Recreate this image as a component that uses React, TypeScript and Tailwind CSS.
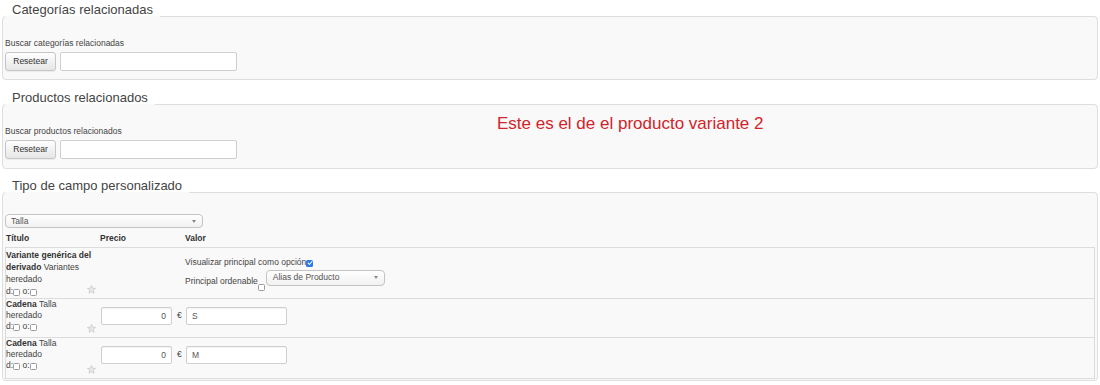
import type { ReactNode } from 'react';

function Check({ checked = false }: { checked?: boolean }) {
  if (checked) {
    return (
      <span className="inline-flex h-[7px] w-[7px] items-center justify-center rounded-[1.5px] bg-[#2f7ae5] align-[-1px]">
        <svg viewBox="0 0 8 8" className="h-[6px] w-[6px]">
          <path d="M1.5 4.2 L3.3 6 L6.6 2" fill="none" stroke="white" strokeWidth="1.4" strokeLinecap="round" strokeLinejoin="round" />
        </svg>
      </span>
    );
  }
  return <span className="inline-block h-[7px] w-[7px] rounded-[1.5px] border border-[#9a9a9a] bg-white align-[-2px]" />;
}

function Star() {
  return (
    <svg viewBox="0 0 10 10" className="h-[9px] w-[9px]">
      <polygon
        points="5,0.6 6.3,3.6 9.5,3.8 7,5.9 7.8,9.2 5,7.4 2.2,9.2 3,5.9 0.5,3.8 3.7,3.6"
        fill="#e8e8e8"
        stroke="#c2c2c2"
        strokeWidth="0.7"
        strokeLinejoin="round"
      />
    </svg>
  );
}

function FakeSelect({ label, className }: { label: string; className: string }) {
  return (
    <div
      className={`flex items-center justify-between rounded-[4px] border border-[#c4c4c4] bg-linear-to-b from-white to-[#f1f1f1] pl-[5px] pr-[6px] text-[8.5px] text-[#555] ${className}`}
    >
      <span>{label}</span>
      <span className="h-0 w-0 border-x-[2.5px] border-t-[3px] border-x-transparent border-t-[#888]" />
    </div>
  );
}

function Box({ legend, children, className = '' }: { legend: string; children: ReactNode; className?: string }) {
  return (
    <fieldset className={`mx-[2px] rounded-[4px] border border-[#dedede] bg-[#f9f9f9] px-[2px] ${className}`}>
      <legend className="px-[7px] pb-[12px] text-[13px] leading-[14px] text-[#444]">{legend}</legend>
      {children}
    </fieldset>
  );
}

function SearchRow({ label }: { label: string }) {
  return (
    <div className="w-[235px]">
      <div className="mt-[9px] text-[8.5px] leading-[11px] text-[#444]">{label}</div>
      <div className="mt-[3px] flex gap-[4px]">
        <button className="h-[19px] w-[51px] rounded-[3px] border border-[#c6c6c6] bg-linear-to-b from-white to-[#e6e6e6] text-[8.5px] text-[#333] shadow-[0_1px_1px_rgba(0,0,0,0.06)]">
          Resetear
        </button>
        <div className="h-[19px] w-[177px] rounded-[2px] border border-[#cfcfcf] bg-white" />
      </div>
    </div>
  );
}

function Input({ value, right, className }: { value: string; right?: boolean; className: string }) {
  return (
    <div
      className={`flex h-[18px] items-center rounded-[2px] border border-[#cfcfcf] bg-white px-[5px] text-[8.5px] text-[#555] shadow-[inset_0_1px_1px_rgba(0,0,0,0.05)] ${right ? 'justify-end' : ''} ${className}`}
    >
      {value}
    </div>
  );
}

const variants = [
  { title: 'Cadena', type: 'Talla', value: 'S', h: 'h-[39px]' },
  { title: 'Cadena', type: 'Talla', value: 'M', h: 'h-[40px]' },
];

export default function App() {
  return (
    <div className="h-[385px] w-[1100px] overflow-hidden bg-white font-['Liberation_Sans',Arial,sans-serif] text-[#333]">
      <Box legend="Categorías relacionadas" className="mt-[3px] pb-[8px]">
        <SearchRow label="Buscar categorías relacionadas" />
      </Box>

      <Box legend="Productos relacionados" className="mt-[11px] pb-[9px]">
        <div className="flex">
          <SearchRow label="Buscar productos relacionados" />
          <div className="-mt-[3px] ml-[257px] text-[17px] leading-[20px] text-[#d2232a]">
            Este es el de el producto variante 2
          </div>
        </div>
      </Box>

      <Box legend="Tipo de campo personalizado" className="mt-[10px] pb-[1px]">
        <FakeSelect label="Talla" className="mt-[9px] h-[14px] w-[198px]" />
        <div className="mt-[5px] grid grid-cols-[94px_85px_1fr] pl-[1px] text-[8.5px] font-bold leading-[11px] text-[#333]">
          <span>Título</span>
          <span>Precio</span>
          <span>Valor</span>
        </div>

        <div className="mt-[3px] border border-[#dcdcdc] text-[8.5px] text-[#444]">
          {/* generic variant row */}
          <div className="grid h-[51px] grid-cols-[94px_85px_1fr] border-b border-[#dcdcdc]">
            <div className="flex">
              <div className="w-[89px] shrink-0 pt-[1px] leading-[12px]">
                <div className="font-bold text-[#333]">Variante genérica del</div>
                <div>
                  <b className="text-[#333]">derivado</b> Variantes
                </div>
                <div>heredado</div>
                <div>
                  d:<Check /> o:<Check />
                </div>
              </div>
              <div className="-ml-[8px] mb-[4px] self-end">
                <Star />
              </div>
            </div>
            <div />
            <div className="pt-[9px]">
              <div className="leading-[11px]">
                Visualizar principal como opción<Check checked />
              </div>
              <div className="mt-[1.5px] flex items-start">
                <span className="mt-[6.5px] leading-[11px]">Principal ordenable</span>
                <span className="mt-[10px]">
                  <Check />
                </span>
                <FakeSelect label="Alias de Producto" className="ml-[1px] h-[16px] w-[119px] pl-[6px]" />
              </div>
            </div>
          </div>

          {variants.map((v, i) => (
            <div
              key={v.value}
              className={`grid grid-cols-[94px_85px_1fr] ${v.h} ${i < variants.length - 1 ? 'border-b border-[#dcdcdc]' : ''}`}
            >
              <div className="flex">
                <div className="w-[81px] shrink-0 leading-[11px]">
                  <div>
                    <b className="text-[#333]">{v.title}</b> {v.type}
                  </div>
                  <div>heredado</div>
                  <div>
                    d:<Check /> o:<Check />
                  </div>
                </div>
                <div className="mb-[4px] self-end">
                  <Star />
                </div>
              </div>
              <div className="flex items-start pt-[8px]">
                <Input value="0" right className="ml-[1px] w-[71px]" />
                <span className="ml-[5px] mt-[3px] leading-[11px]">€</span>
              </div>
              <div className="pt-[8px]">
                <Input value={v.value} className="ml-[1px] w-[101px]" />
              </div>
            </div>
          ))}
        </div>
      </Box>
    </div>
  );
}
